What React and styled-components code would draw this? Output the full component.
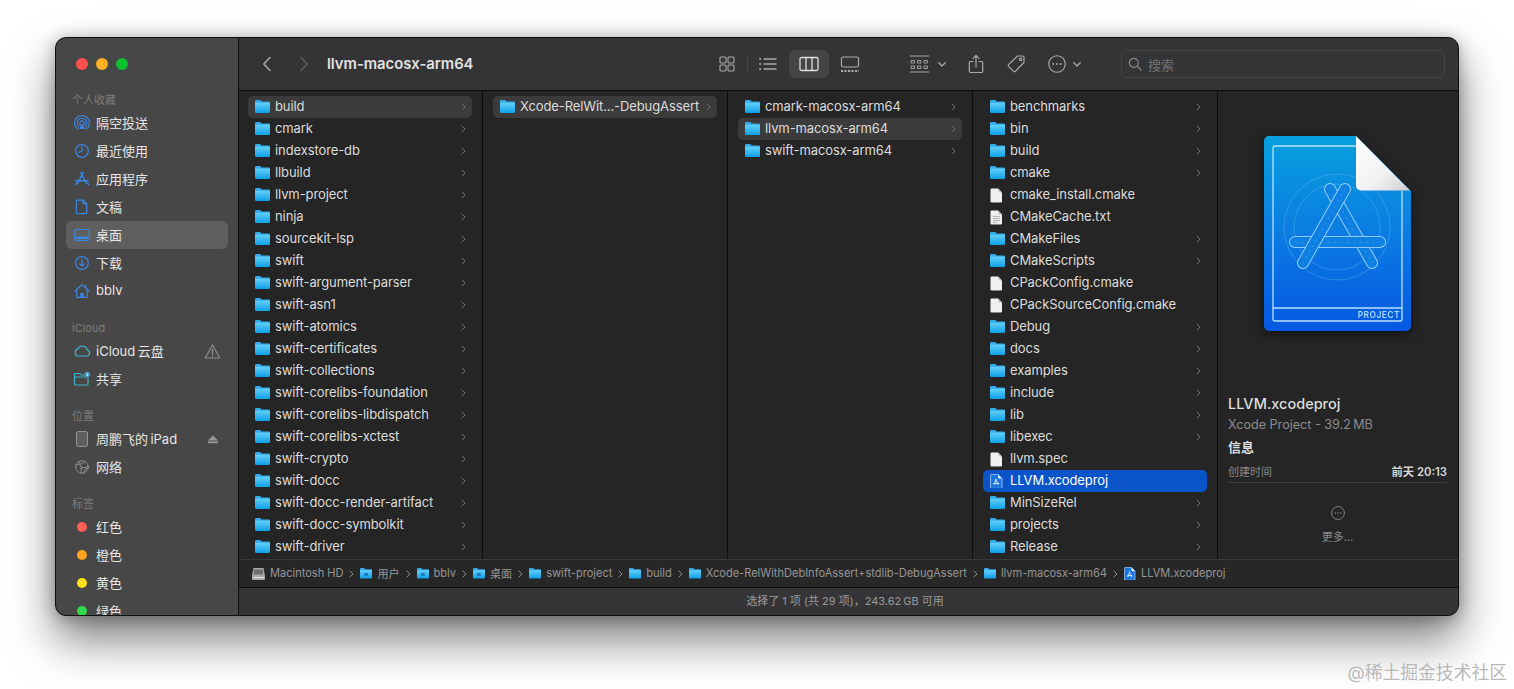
import React from "react";
import styled, { createGlobalStyle } from "styled-components";

const Global = createGlobalStyle`
  html, body { margin: 0; padding: 0; background: #fff; overflow: hidden; }
  body { font-family: Inter, "Noto Sans CJK SC", sans-serif; -webkit-font-smoothing: antialiased; }
`;

const Page = styled.div`
  position: relative;
  width: 1514px;
  height: 689px;
  padding: 37px 0 0 55px;
  box-sizing: border-box;
  background: #fff;
  overflow: hidden;
`;
const Watermark = styled.div`
  position: absolute;
  right: 7px;
  bottom: 4px;
  font-size: 17.8px;
  line-height: 24px;
  color: #b9b9b9;
  white-space: nowrap;
`;
const Win = styled.div`
  width: 1404px;
  height: 579px;
  box-sizing: border-box;
  display: flex;
  border: 1px solid #101010;
  border-radius: 11px;
  overflow: hidden;
  box-shadow: 0 24px 46px rgba(0, 0, 0, 0.5), 0 2px 16px rgba(0, 0, 0, 0.3);
  background: #252525;
`;
const Sidebar = styled.aside`
  width: 183px;
  flex: none;
  box-sizing: border-box;
  border-right: 1px solid #0d0d0d;
  background: #474747;
  padding: 0 10px;
  overflow: hidden;
`;
const Lights = styled.div`
  height: 53px;
  box-sizing: border-box;
  padding: 20px 0 0 10px;
  display: flex;
  gap: 8px;
`;
const Light = styled.span`
  width: 12px;
  height: 12px;
  border-radius: 50%;
  background: ${(p) => p.$c};
`;
const SideTitle = styled.div`
  height: 18px;
  line-height: 18px;
  margin-top: ${(p) => (p.$first ? 0 : 14)}px;
  padding-left: 6px;
  font-size: 11px;
  color: #7d7d7d;
`;
const SideRow = styled.div`
  height: 28px;
  display: flex;
  align-items: center;
  gap: 4px;
  padding: 0 6px;
  border-radius: 6px;
  background: ${(p) => (p.$active ? "#5f5f5f" : "transparent")};
  font-size: 13px;
  color: #e6e6e6;
`;
const SideIcon = styled.span`
  width: 20px;
  height: 20px;
  flex: none;
  display: flex;
  align-items: center;
  justify-content: center;
  color: ${(p) => p.$c || "#3b86e4"};
`;
const SideLabel = styled.span`
  flex: 1;
  white-space: nowrap;
  padding-bottom: 2px;
`;
const Trailing = styled.span`
  display: flex;
  flex: none;
  margin-right: ${(p) => p.$mr}px;
`;
const Dot = styled.span`
  width: 10px;
  height: 10px;
  border-radius: 50%;
  background: ${(p) => p.$c};
`;
const Right = styled.div`
  flex: 1;
  min-width: 0;
  display: flex;
  flex-direction: column;
`;
const Toolbar = styled.header`
  height: 53px;
  flex: none;
  box-sizing: border-box;
  border-bottom: 1px solid #0c0c0c;
  background: #343436;
  display: flex;
  align-items: center;
  padding: 0 13px 0 9px;
`;
const NavBtn = styled.span`
  width: 37px;
  height: 28px;
  display: flex;
  align-items: center;
  justify-content: center;
  color: ${(p) => (p.$dim ? "#5f5f61" : "#a9a9ab")};
`;
const Title = styled.div`
  flex: none;
  width: 380px;
  margin-left: 5px;
  font-size: 14.8px;
  font-weight: 600;
  color: #e2e2e2;
`;
const ToolBtn = styled.span`
  width: ${(p) => p.$w || 40}px;
  height: 28px;
  flex: none;
  margin-left: ${(p) => p.$ml || 0}px;
  display: flex;
  align-items: center;
  justify-content: center;
  gap: ${(p) => p.$gap || 0}px;
  border-radius: 6px;
  color: #a9a9ab;
  background: ${(p) => (p.$on ? "#454547" : "transparent")};
`;
const Sep = styled.span`
  width: 1px;
  height: 20px;
  flex: none;
  background: #424244;
`;
const Search = styled.div`
  width: 324px;
  height: 28px;
  flex: none;
  margin-left: auto;
  box-sizing: border-box;
  border: 1px solid #444446;
  border-radius: 6px;
  background: #353537;
  display: flex;
  align-items: center;
  gap: 6px;
  padding-left: 6px;
  color: #737375;
  font-size: 13px;
`;
const Main = styled.div`
  height: 468px;
  flex: none;
  display: flex;
`;
const Column = styled.div`
  width: ${(p) => (p.$first ? 244 : 245)}px;
  flex: none;
  box-sizing: border-box;
  border-right: 1px solid #0d0d0d;
  padding: 5px 10px 0 ${(p) => (p.$first ? 9 : 10)}px;
  overflow: hidden;
  background: #252525;
`;
const Row = styled.div`
  height: 22px;
  display: flex;
  align-items: center;
  padding: 0 6px 0 7px;
  border-radius: 5px;
  background: ${(p) => (p.$sel ? "#0b53c8" : p.$hl ? "#3b3b3b" : "transparent")};
  color: ${(p) => (p.$sel ? "#fff" : "#dcdcdc")};
  font-size: 13px;
  letter-spacing: -0.1px;
`;
const RowIcon = styled.span`
  width: 20px;
  flex: none;
  display: flex;
  align-items: center;
`;
const RowLabel = styled.span`
  flex: 1;
  white-space: nowrap;
  overflow: hidden;
  padding-bottom: 2px;
`;
const Chevron = styled.svg`
  width: 5px;
  height: 8px;
  flex: none;
  color: ${(p) => p.$c || "#6f6f6f"};
`;
const Preview = styled.section`
  flex: 1;
  min-width: 0;
  background: #252525;
  padding: 0 11px 0 10px;
  display: flex;
  flex-direction: column;
`;
const BigIconWrap = styled.div`
  height: 303px;
  flex: none;
  padding: 45px 0 0 36px;
  box-sizing: border-box;
`;
const BigIcon = styled.svg`
  display: block;
  width: 147px;
  height: 195px;
  filter: drop-shadow(0 3px 5px rgba(0, 0, 0, 0.55));
`;
const PName = styled.div`
  font-size: 14.5px;
  line-height: 20px;
  font-weight: 500;
  color: #dedede;
`;
const PKind = styled.div`
  font-size: 12.6px;
  line-height: 20px;
  margin-top: 1px;
  color: #8b8b8b;
`;
const PHead = styled.div`
  font-size: 13px;
  line-height: 20px;
  font-weight: 700;
  color: #dedede;
  margin-top: 2px;
`;
const InfoClip = styled.div`
  height: 31px;
  margin-top: 2px;
  overflow: hidden;
`;
const InfoRow = styled.div`
  height: 24px;
  box-sizing: border-box;
  display: flex;
  justify-content: space-between;
  align-items: center;
  font-size: 11px;
  color: #858585;
  border-bottom: 1px solid #3c3c3c;
`;
const InfoVal = styled.span`
  color: #d6d6d6;
  font-weight: 600;
  font-size: 11.3px;
`;
const More = styled.div`
  margin-top: 16px;
  display: flex;
  flex-direction: column;
  align-items: center;
  gap: 8px;
  color: #8b8b8b;
  font-size: 11px;
`;
const PathBar = styled.div`
  height: 29px;
  flex: none;
  box-sizing: border-box;
  border-top: 1px solid #3a3a3a;
  border-bottom: 1px solid #0c0c0c;
  background: #272727;
  display: flex;
  align-items: center;
  padding-left: 13px;
  font-size: 11.05px;
  color: #959595;
  white-space: nowrap;
`;
const Crumb = styled.span`
  display: flex;
  align-items: center;
  gap: 5px;
`;
const CrumbText = styled.span`
  padding-bottom: 2px;
`;
const CrumbSep = styled.span`
  display: flex;
  width: 17px;
  justify-content: center;
`;
const Status = styled.div`
  height: 27px;
  flex: none;
  box-sizing: border-box;
  display: flex;
  align-items: center;
  justify-content: center;
  padding: 0 7px 3px 0;
  background: #353537;
  color: #9a9a9a;
  font-size: 11px;
`;
const Defs = styled.svg`
  position: absolute;
  width: 0;
  height: 0;
`;

const Ln = { fill: "none", stroke: "currentColor", strokeWidth: 1.2, strokeLinecap: "round", strokeLinejoin: "round" };

const Folder = ({ mark, size = 15 }) => (
  <svg width={size} height={size * 0.87} viewBox="0 0 15 13">
    <path d="M1.2 0h4l1.4 1.6h7.2a1.2 1.2 0 0 1 1.2 1.2V5H0V1.2A1.2 1.2 0 0 1 1.2 0z" fill="#35abe9" />
    <path d="M0 3.4a.6.6 0 0 1 .6-.6h13.8a.6.6 0 0 1 .6.6v8.4a1.2 1.2 0 0 1-1.2 1.2H1.2A1.2 1.2 0 0 1 0 11.8z" fill="url(#fold)" />
    {mark && <rect x="5" y="6" width="5" height="4" rx="1" fill="#1a7fc0" />}
  </svg>
);
const FileIc = ({ lines }) => (
  <svg width="13" height="15" viewBox="0 0 13 15">
    <path d="M1.5 .5h6.6L12 4.4v9a1 1 0 0 1-1 1H1.5a1 1 0 0 1-1-1v-12a1 1 0 0 1 1-1z" fill="#f0f0f0" />
    <path d="M8 .5v3a1 1 0 0 0 1 1h3z" fill="#c8c8c8" />
    {lines && <path d="M3 6.5h7M3 8.5h7M3 10.5h7M3 12.5h4" stroke="#9a9a9a" strokeWidth=".7" />}
  </svg>
);
const ProjIc = ({ w = 13 }) => (
  <svg width={w} height={w * 1.15} viewBox="0 0 13 15">
    <path d="M1.5 .5h6.6L12 4.4v9a1 1 0 0 1-1 1H1.5a1 1 0 0 1-1-1v-12a1 1 0 0 1 1-1z" fill="#1a75e0" stroke="#a9cdf7" strokeWidth=".8" />
    <path d="M8 .5v3a1 1 0 0 0 1 1h3z" fill="#dfeefd" />
    <path d="M6.4 5L4 11M5.4 5L8.6 11M3.4 9.4h5.8" stroke="#e8f3ff" strokeWidth=".9" fill="none" />
  </svg>
);
const Chev = ({ c }) => (
  <Chevron viewBox="0 0 5 8" $c={c}><path d="M1 1l3 3-3 3" fill="none" stroke="currentColor" strokeWidth="1" strokeLinecap="round" strokeLinejoin="round" /></Chevron>
);

const Sv = ({ s = 18, h, vb, children }) => (
  <svg width={s} height={h || s} viewBox={vb || `0 0 ${s} ${h || s}`}>{children}</svg>
);

const IAir = () => (
  <Sv><g {...Ln}>
    <path d="M5.900 12.700a4.800 4.800 0 1 1 6.200 0" /><path d="M7.400 10.700a2.200 2.200 0 1 1 3.200 0" />
    <path d="M4.600 15.100a7.500 7.500 0 1 1 8.800 0" />
  </g><path d="M9 9.500l3 5.500H6z" fill="currentColor" /></Sv>
);
const IClock = () => (
  <Sv><g {...Ln}><circle cx="9" cy="9" r="6.300" /><path d="M9 4.800V9.200L5.800 10.400" /></g></Sv>
);
const IApp = () => (
  <Sv><g {...Ln} strokeWidth="1.500"><path d="M10.200 2.500L5 12.600M7.800 2.500L13 12.600M2.300 14.800l2-2M15.700 14.800l-2-2M2.800 10.800h12.400" /></g></Sv>
);
const IDoc = () => (
  <Sv><g {...Ln}><path d="M4.300 2.200h6l3.400 3.500v9a1 1 0 0 1-1 1H4.300a1 1 0 0 1-1-1v-11.500a1 1 0 0 1 1-1z" /><path d="M10 2.200v3.500h3.600" /></g></Sv>
);
const IDesk = () => (
  <Sv><g {...Ln}><rect x="1.800" y="3.500" width="14.400" height="11" rx="1.500" /></g><rect x="3.200" y="10.600" width="11.600" height="2.500" fill="currentColor" /></Sv>
);
const IDown = () => (
  <Sv><g {...Ln}><circle cx="9" cy="9" r="6.300" /><path d="M9 5.500V12.200M6.600 9.800L9 12.200l2.400-2.400" /></g></Sv>
);
const IHome = () => (
  <Sv><g {...Ln}><path d="M1.800 9.300L9 2.800l7.200 6.500" /><path d="M3.800 8.200v7.200h10.400V8.200" /><path d="M12.800 3.200v2.800" /></g><rect x="7.200" y="11" width="3.600" height="4.400" fill="currentColor" /></Sv>
);
const ICloud = () => (
  <Sv><path {...Ln} d="M5 14h8.600a3.100 3.100 0 0 0 .6-6.100A4.900 4.900 0 0 0 5 6.800 3.700 3.700 0 0 0 5 14z" /></Sv>
);
const IShare = () => (
  <Sv><g {...Ln}><path d="M12 5H8.200L7 3.500H2.500a1 1 0 0 0-1 1V14a1 1 0 0 0 1 1h11.500a1 1 0 0 0 1-1V8.500" /><path d="M1.500 7h13.500" /></g><circle cx="14.300" cy="4.500" r="2.700" fill="#4a9fd8" /><rect x="13.900" y="3.600" width=".9" height="2.400" fill="#fff" /></Sv>
);
const IWarn = () => (
  <Sv s={17}><g {...Ln} stroke="#8c8c8c"><path d="M8.500 2L15.800 15H1.200z" /><path d="M8.500 6.500v4.500" strokeWidth="1.400" /></g><circle cx="8.500" cy="13" r=".8" fill="#8c8c8c" /></Sv>
);
const IPad = () => (
  <svg width="12" height="16" viewBox="0 0 12 16"><rect x=".6" y=".6" width="10.800" height="14.800" rx="1.500" fill="#5d5d5d" stroke="#a2a2a2" strokeWidth=".9" /></svg>
);
const IEject = () => (
  <svg width="10" height="9" viewBox="0 0 11 9"><path d="M5.500 0L11 5.500H0z" fill="#999" /><rect y="6.600" width="11" height="2" fill="#999" /></svg>
);
const IGlobe = () => (
  <Sv><g {...Ln} stroke="#8f8f8f" strokeWidth="1"><circle cx="9" cy="9" r="6.300" /><path d="M5.500 3.800c3 3 3.600 7.500 2.200 11.300M12 3.500C9 6 7 6.500 3 6.800M15 10.500c-3-1.500-5.500-1.500-7.500 0M11 15c.5-3 1.500-5 3.500-7" /></g></Sv>
);

const IGrid = () => (
  <Sv s={16}><g {...Ln} strokeWidth="1.100"><rect x="1" y="1" width="6" height="6" rx="1" /><rect x="9" y="1" width="6" height="6" rx="1" /><rect x="1" y="9" width="6" height="6" rx="1" /><rect x="9" y="9" width="6" height="6" rx="1" /></g></Sv>
);
const IList = () => (
  <Sv s={18} h={14}><g {...Ln} strokeWidth="1.300"><path d="M5 2h12M5 7h12M5 12h12" /><path d="M1 2h.3M1 7h.3M1 12h.3" strokeWidth="1.800" /></g></Sv>
);
const ICols = () => (
  <Sv s={20} h={16}><g {...Ln} stroke="#e0e0e0" strokeWidth="1.300"><rect x="1" y="1.500" width="18" height="13" rx="1.500" /><path d="M7 1.500v13M13 1.500v13" /></g></Sv>
);
const IGallery = () => (
  <Sv s={20} h={17}><g {...Ln} strokeWidth="1.200"><rect x="1.500" y="1" width="17" height="10" rx="1.500" /></g><path d="M1 15h18" stroke="currentColor" strokeWidth="2" strokeDasharray="2.200 1.300" /></Sv>
);
const IGroup = () => (
  <Sv s={20} h={18}><g fill="none" stroke="currentColor"><path d="M0 1h19M0 17h19" strokeWidth="1.100" /><path d="M1 5.500h3.500v2.500H1zM7.500 5.500H11V8H7.500zM14 5.500h3.500V8H14zM1 11h3.500v2.500H1zM7.500 11H11v2.500H7.500zM14 11h3.500v2.500H14z" strokeWidth=".9" /></g></Sv>
);
const IDownChev = () => (
  <svg width="8" height="5" viewBox="0 0 8 5"><path d="M.8.8L4 4 7.200.8" fill="none" stroke="currentColor" strokeWidth="1.300" strokeLinecap="round" strokeLinejoin="round" /></svg>
);
const IShareUp = () => (
  <svg width="16" height="20" viewBox="0 0 16 20"><g {...Ln}><path d="M5 7.500H2.500a1.200 1.200 0 0 0-1.200 1.200v8.600a1.200 1.200 0 0 0 1.200 1.200h11a1.200 1.200 0 0 0 1.200-1.200V8.700a1.200 1.200 0 0 0-1.200-1.200H11" /><path d="M8 13V1.500M5 4.300L8 1.300l3 3" /></g></svg>
);
const ITag = () => (
  <Sv s={20}><g {...Ln}><path d="M11.500 2h5.200a1.300 1.300 0 0 1 1.300 1.300v5.200L9.300 17.300a1.200 1.200 0 0 1-1.700 0l-5-5a1.200 1.200 0 0 1 0-1.700z" /><circle cx="14.600" cy="5.400" r="1.200" /></g></Sv>
);
const IMore = ({ s = 18 }) => (
  <svg width={s} height={s} viewBox="0 0 17 17"><circle cx="8.500" cy="8.500" r="7.800" fill="none" stroke="currentColor" strokeWidth="1.100" /><circle cx="5" cy="8.500" r=".9" fill="currentColor" /><circle cx="8.500" cy="8.500" r=".9" fill="currentColor" /><circle cx="12" cy="8.500" r=".9" fill="currentColor" /></svg>
);
const IMag = () => (
  <Sv s={14}><g fill="none" stroke="#8a8a8c" strokeWidth="1.200" strokeLinecap="round"><circle cx="5.800" cy="5.800" r="4.500" /><path d="M9.200 9.200l3.800 3.800" /></g></Sv>
);
const IBack = () => (
  <svg width="10" height="16" viewBox="0 0 10 16"><path d="M8 1.500L1.800 8 8 14.500" fill="none" stroke="currentColor" strokeWidth="1.600" strokeLinecap="round" strokeLinejoin="round" /></svg>
);
const IFwd = () => (
  <svg width="10" height="16" viewBox="0 0 10 16"><path d="M2 1.500L8.200 8 2 14.500" fill="none" stroke="currentColor" strokeWidth="1.600" strokeLinecap="round" strokeLinejoin="round" /></svg>
);
const IHD = () => (
  <svg width="13" height="12" viewBox="0 0 13 12"><path d="M1.500 0h10l1.500 8v3a1 1 0 0 1-1 1H1a1 1 0 0 1-1-1V8z" fill="#a8a8a8" /><rect x="2" y="1.500" width="9" height="5" fill="#6f6f6f" /><rect x="1" y="9" width="11" height="1.200" fill="#dcdcdc" /></svg>
);

const Leg = ({ x1, y1, x2, y2 }) => (
  <g strokeLinecap="round">
    <line x1={x1} y1={y1} x2={x2} y2={y2} stroke="#8fcdf8" strokeWidth="12" />
    <line x1={x1} y1={y1} x2={x2} y2={y2} stroke="#0f80e3" strokeWidth="10" />
    <line x1={x1} y1={y1} x2={x2} y2={y2} stroke="#4ea6ee" strokeWidth=".7" strokeDasharray="1.500 5" />
  </g>
);

const ProjectIcon = () => (
  <BigIcon viewBox="0 0 147 195">
    <defs>
      <linearGradient id="pbody" x1="0" y1="0" x2="0" y2="1">
        <stop offset="0" stopColor="#07a0dd" />
        <stop offset=".5" stopColor="#0b7ce2" />
        <stop offset="1" stopColor="#0558e2" />
      </linearGradient>
      <linearGradient id="pfold" x1="0" y1="0" x2="1" y2="1">
        <stop offset="0" stopColor="#ffffff" />
        <stop offset=".6" stopColor="#f1f1f1" />
        <stop offset="1" stopColor="#cfcfcf" />
      </linearGradient>
    </defs>
    <path d="M5 0H92L147 55V190a5 5 0 0 1-5 5H5a5 5 0 0 1-5-5V5a5 5 0 0 1 5-5z" fill="url(#pbody)" />
    <path d="M92 10H11a2 2 0 0 0-2 2V183a2 2 0 0 0 2 2H136a2 2 0 0 0 2-2V55" fill="none" stroke="#b6e2fb" strokeWidth="1.300" />
    <line x1="9" y1="172" x2="138" y2="172" stroke="#b6e2fb" strokeWidth="1.300" />
    <g fill="none" stroke="#6cbaf0" strokeWidth=".7" opacity=".55">
      <circle cx="73" cy="91" r="53" />
      <circle cx="73" cy="91" r="43" />
    </g>
    <Leg x1={66} y1={53} x2={108} y2={127} />
    <Leg x1={31} y1={106} x2={116} y2={106} />
    <Leg x1={81} y1={53} x2={39} y2={127} />
    <path d="M92 0L146 54.500H97a5 5 0 0 1-5-5z" fill="url(#pfold)" />
    <text x="136" y="182" textAnchor="end" fontSize="8.500" fontWeight="600" letterSpacing=".4" fill="#a6d9fb" fontFamily="Inter, sans-serif">PROJECT</text>
  </BigIcon>
);

const col1 = ["build","cmark","indexstore-db","llbuild","llvm-project","ninja","sourcekit-lsp","swift","swift-argument-parser","swift-asn1","swift-atomics","swift-certificates","swift-collections","swift-corelibs-foundation","swift-corelibs-libdispatch","swift-corelibs-xctest","swift-crypto","swift-docc","swift-docc-render-artifact","swift-docc-symbolkit","swift-driver"];
const col4 = [["benchmarks"],["bin"],["build"],["cmake"],["cmake_install.cmake","f"],["CMakeCache.txt","t"],["CMakeFiles"],["CMakeScripts"],["CPackConfig.cmake","f"],["CPackSourceConfig.cmake","f"],["Debug"],["docs"],["examples"],["include"],["lib"],["libexec"],["llvm.spec","f"],["LLVM.xcodeproj","p"],["MinSizeRel"],["projects"],["Release"]];

const FinderRow = ({ name, kind, hl, sel }) => (
  <Row $hl={hl} $sel={sel}>
    <RowIcon>
      {kind === "p" ? <ProjIc /> : kind === "f" ? <FileIc /> : kind === "t" ? <FileIc lines /> : <Folder />}
    </RowIcon>
    <RowLabel>{name}</RowLabel>
    {!kind && <Chev />}
  </Row>
);

const favs = [
  ["隔空投送", IAir], ["最近使用", IClock], ["应用程序", IApp], ["文稿", IDoc],
  ["桌面", IDesk, true], ["下载", IDown], ["bblv", IHome],
];
const crumbs = [
  ["Macintosh HD", <IHD key="h" />], ["用户", <Folder size={12} mark key="a" />], ["bblv", <Folder size={12} mark key="b" />],
  ["桌面", <Folder size={12} mark key="c" />], ["swift-project", <Folder size={12} key="d" />], ["build", <Folder size={12} key="e" />],
  ["Xcode-RelWithDebInfoAssert+stdlib-DebugAssert", <Folder size={12} key="f" />], ["llvm-macosx-arm64", <Folder size={12} key="g" />],
  ["LLVM.xcodeproj", <ProjIc w={12} key="i" />],
];

export default function App() {
  return (
    <Page>
      <Global />
      <Defs aria-hidden="true">
        <defs>
          <linearGradient id="fold" x1="0" y1="0" x2="0" y2="1">
            <stop offset="0" stopColor="#62cff9" />
            <stop offset="1" stopColor="#0f9fe8" />
          </linearGradient>
        </defs>
      </Defs>
      <Win>
        <Sidebar>
          <Lights>
            <Light $c="#ff4f4b" /><Light $c="#feb024" /><Light $c="#0ac02f" />
          </Lights>
          <SideTitle $first>个人收藏</SideTitle>
          {favs.map(([label, Ic, active]) => (
            <SideRow key={label} $active={active}>
              <SideIcon><Ic /></SideIcon>
              <SideLabel>{label}</SideLabel>
            </SideRow>
          ))}
          <SideTitle>iCloud</SideTitle>
          <SideRow>
            <SideIcon $c="#3fb4c8"><ICloud /></SideIcon>
            <SideLabel>iCloud{"\u2009"}云盘</SideLabel>
            <Trailing $mr={1}><IWarn /></Trailing>
          </SideRow>
          <SideRow>
            <SideIcon $c="#3fb4c8"><IShare /></SideIcon>
            <SideLabel>共享</SideLabel>
          </SideRow>
          <SideTitle>位置</SideTitle>
          <SideRow>
            <SideIcon><IPad /></SideIcon>
            <SideLabel>周鹏飞的{"\u2009"}iPad</SideLabel>
            <Trailing $mr={4}><IEject /></Trailing>
          </SideRow>
          <SideRow>
            <SideIcon><IGlobe /></SideIcon>
            <SideLabel>网络</SideLabel>
          </SideRow>
          <SideTitle>标签</SideTitle>
          {[["红色", "#ff5f57"], ["橙色", "#ffa41f"], ["黄色", "#ffe11d"], ["绿色", "#32d74b"]].map(([l, c]) => (
            <SideRow key={l}>
              <SideIcon><Dot $c={c} /></SideIcon>
              <SideLabel>{l}</SideLabel>
            </SideRow>
          ))}
        </Sidebar>
        <Right>
          <Toolbar>
            <NavBtn><IBack /></NavBtn>
            <NavBtn $dim><IFwd /></NavBtn>
            <Title>llvm-macosx-arm64</Title>
            <ToolBtn><IGrid /></ToolBtn>
            <Sep />
            <ToolBtn><IList /></ToolBtn>
            <ToolBtn $ml={1} $on><ICols /></ToolBtn>
            <ToolBtn $ml={1}><IGallery /></ToolBtn>
            <ToolBtn $w={52} $ml={32} $gap={8}><IGroup /><IDownChev /></ToolBtn>
            <ToolBtn $ml={2}><IShareUp /></ToolBtn>
            <ToolBtn><ITag /></ToolBtn>
            <ToolBtn $w={52} $ml={2} $gap={7}><IMore /><IDownChev /></ToolBtn>
            <Search><IMag />搜索</Search>
          </Toolbar>
          <Main>
            <Column $first>
              {col1.map((n, i) => <FinderRow key={n} name={n} hl={i === 0} />)}
            </Column>
            <Column>
              <FinderRow name="Xcode-RelWit...-DebugAssert" hl />
            </Column>
            <Column>
              <FinderRow name="cmark-macosx-arm64" />
              <FinderRow name="llvm-macosx-arm64" hl />
              <FinderRow name="swift-macosx-arm64" />
            </Column>
            <Column>
              {col4.map(([n, k]) => <FinderRow key={n} name={n} kind={k} sel={k === "p"} />)}
            </Column>
            <Preview>
              <BigIconWrap><ProjectIcon /></BigIconWrap>
              <PName>LLVM.xcodeproj</PName>
              <PKind>Xcode Project - 39.2{"\u2009"}MB</PKind>
              <PHead>信息</PHead>
              <InfoClip>
                <InfoRow>创建时间<InfoVal>前天 20:13</InfoVal></InfoRow>
                <InfoRow>修改时间<InfoVal>前天 20:13</InfoVal></InfoRow>
              </InfoClip>
              <More>
                <IMore s={14} />
                更多…
              </More>
            </Preview>
          </Main>
          <PathBar>
            {crumbs.map(([t, ic], i) => (
              <React.Fragment key={t}>
                <Crumb>{ic}<CrumbText>{t}</CrumbText></Crumb>
                {i < crumbs.length - 1 && <CrumbSep><Chev c="#8f8f8f" /></CrumbSep>}
              </React.Fragment>
            ))}
          </PathBar>
          <Status>选择了 1 项 (共 29 项)，243.62{"\u2009"}GB 可用</Status>
        </Right>
      </Win>
      <Watermark>@稀土掘金技术社区</Watermark>
    </Page>
  );
}
